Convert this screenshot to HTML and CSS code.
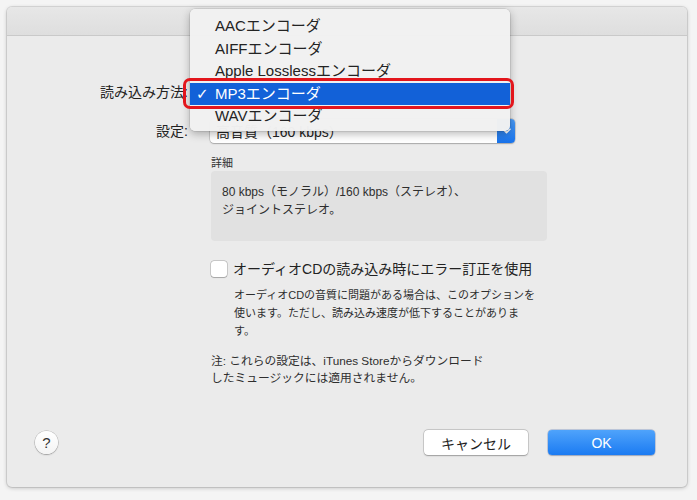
FILE: index.html
```html
<!DOCTYPE html>
<html lang="ja">
<head>
<meta charset="utf-8">
<title>読み込み設定</title>
<link rel="stylesheet" href="styles.css">
</head>
<body>
<div class="window">
  <div class="titlebar"></div>
  <div class="body">
    <div class="form">
      <div class="label">読み込み方法:</div>
      <div class="popup popup-open"></div>
      <div class="label">設定:</div>
      <div class="popup">
        <span class="popup-value">高音質（160 kbps）</span>
        <span class="popup-arrow">
          <svg width="9" height="6" viewBox="0 0 9 6"><path d="M1 1.2 L4.5 4.6 L8 1.2" fill="none" stroke="#fff" stroke-width="1.6" stroke-linecap="round" stroke-linejoin="round"/></svg>
        </span>
      </div>
    </div>

    <div class="column">
      <div class="details-title">詳細</div>
      <div class="details-box">80 kbps（モノラル）/160 kbps（ステレオ）、<br>ジョイントステレオ。</div>

      <label class="check-row">
        <span class="checkbox"></span>
        <span class="check-label">オーディオCDの読み込み時にエラー訂正を使用</span>
      </label>
      <p class="check-desc">オーディオCDの音質に問題がある場合は、このオプションを<br>使います。ただし、読み込み速度が低下することがありま<br>す。</p>

      <p class="note">注: これらの設定は、iTunes Storeからダウンロード<br>したミュージックには適用されません。</p>
    </div>

    <div class="footer">
      <button class="help">?</button>
      <div class="actions">
        <button class="btn">キャンセル</button>
        <button class="btn btn-default">OK</button>
      </div>
    </div>
  </div>

  <ul class="menu">
    <li class="menu-item">AACエンコーダ</li>
    <li class="menu-item">AIFFエンコーダ</li>
    <li class="menu-item">Apple Losslessエンコーダ</li>
    <li class="menu-item selected"><span class="check">✓</span>MP3エンコーダ</li>
    <li class="menu-item">WAVエンコーダ</li>
  </ul>
  <div class="callout"></div>
</div>
</body>
</html>
```

FILE: styles.css
```css
* {
  box-sizing: border-box;
}

html, body {
  margin: 0;
  padding: 0;
}

body {
  background: #f4f4f4;
  font-family: "Liberation Sans", "Noto Sans CJK JP", sans-serif;
  color: #262626;
  padding: 7px;
}

.window {
  position: relative;
  width: 680px;
  height: 480px;
  background: #ebebeb;
  border-radius: 5px;
  box-shadow: 0 0 0 1px rgba(0, 0, 0, 0.09), 0 1px 4px rgba(0, 0, 0, 0.22);
  display: flex;
  flex-direction: column;
}

.titlebar {
  height: 29px;
  flex: none;
  background: linear-gradient(#e7e7e7, #dedede);
  border-bottom: 1px solid #c9c9c9;
  border-radius: 5px 5px 0 0;
}

.body {
  flex: 1;
  display: flex;
  flex-direction: column;
  padding-top: 44px;
}

/* label / popup rows */
.form {
  display: grid;
  grid-template-columns: 181px 305px;
  column-gap: 22px;
  row-gap: 15px;
  align-items: center;
}

.label {
  text-align: right;
  font-size: 14px;
  line-height: 24px;
  color: #222;
}

.popup {
  height: 24px;
  display: flex;
  align-items: center;
  background: #fff;
  border-radius: 4px;
  box-shadow: 0 0 0 0.5px rgba(0, 0, 0, 0.22), 0 0.5px 1.5px rgba(0, 0, 0, 0.2);
  overflow: hidden;
}

.popup-open {
  visibility: hidden;
}

.popup-value {
  flex: 1;
  padding-left: 6px;
  font-size: 14px;
  color: #222;
  white-space: nowrap;
}

.popup-arrow {
  width: 18px;
  height: 100%;
  display: flex;
  align-items: center;
  justify-content: center;
  background: linear-gradient(#4b9cf8, #1872ea);
}

/* right-hand column */
.column {
  margin-left: 204px;
  display: flex;
  flex-direction: column;
  align-items: flex-start;
}

.details-title {
  margin-top: 13px;
  font-size: 11px;
  line-height: 14px;
  color: #333;
}

.details-box {
  margin-top: 1px;
  width: 336px;
  height: 70px;
  padding: 12px 11px;
  background: #e1e1e1;
  border-radius: 4px;
  font-size: 12px;
  line-height: 18px;
  color: #2e2e2e;
}

.check-row {
  margin-top: 20px;
  display: flex;
  align-items: center;
  gap: 6px;
}

.checkbox {
  width: 16px;
  height: 16px;
  background: #fff;
  border-radius: 3px;
  box-shadow: 0 0 0 0.5px rgba(0, 0, 0, 0.28), 0 0.5px 1px rgba(0, 0, 0, 0.18);
}

.check-label {
  font-size: 14px;
  line-height: 16px;
  color: #222;
}

.check-desc {
  margin: 9px 0 0 23px;
  font-size: 11px;
  line-height: 18px;
  color: #2e2e2e;
}

.note {
  margin: 12px 0 0 0;
  font-size: 11.75px;
  line-height: 17px;
  color: #2e2e2e;
}

/* bottom buttons */
.footer {
  margin-top: auto;
  padding: 0 32px 32px 28px;
  display: flex;
  align-items: center;
  justify-content: space-between;
}

.help {
  width: 23px;
  height: 23px;
  padding: 0;
  border: none;
  border-radius: 50%;
  background: linear-gradient(#ffffff, #f4f4f4);
  box-shadow: 0 0 0 0.5px rgba(0, 0, 0, 0.25), 0 1px 1.5px rgba(0, 0, 0, 0.22);
  font-family: "Liberation Sans", sans-serif;
  font-size: 15px;
  color: #333;
  line-height: 23px;
}

.actions {
  display: flex;
  gap: 20px;
}

.btn {
  width: 104px;
  height: 25px;
  padding: 0;
  border: none;
  border-radius: 4px;
  background: #fff;
  box-shadow: 0 0 0 0.5px rgba(0, 0, 0, 0.22), 0 0.5px 1.5px rgba(0, 0, 0, 0.25);
  font-family: "Liberation Sans", "Noto Sans CJK JP", sans-serif;
  font-size: 14px;
  color: #222;
}

.btn-default {
  width: 107px;
  background: linear-gradient(#4fa3fb, #1b7bf2);
  color: #fff;
  box-shadow: 0 0 0 0.5px rgba(0, 60, 170, 0.35), 0 0.5px 1.5px rgba(0, 0, 0, 0.2);
}

/* open popup menu overlaying the first row */
.menu {
  position: absolute;
  left: 183px;
  top: 2px;
  width: 320px;
  height: 122px;
  margin: 0;
  padding: 6px 0 0 0;
  list-style: none;
  background: rgba(241, 241, 241, 0.98);
  border-radius: 5px;
  box-shadow: 0 0 0 0.5px rgba(0, 0, 0, 0.14), 0 3px 9px rgba(0, 0, 0, 0.28);
}

.menu-item {
  position: relative;
  height: 22.5px;
  line-height: 22.5px;
  padding-left: 25px;
  font-size: 15px;
  color: #232323;
  white-space: nowrap;
}

.menu-item.selected {
  background: #1261d8;
  color: #fff;
}

.check {
  position: absolute;
  left: 6px;
  top: 0;
  font-family: "DejaVu Sans", sans-serif;
  font-size: 15px;
}

/* red highlight ring around the chosen entry */
.callout {
  position: absolute;
  left: 176px;
  top: 71px;
  width: 331px;
  height: 31px;
  border: 3px solid #e3161c;
  border-radius: 7px;
  pointer-events: none;
}
```
